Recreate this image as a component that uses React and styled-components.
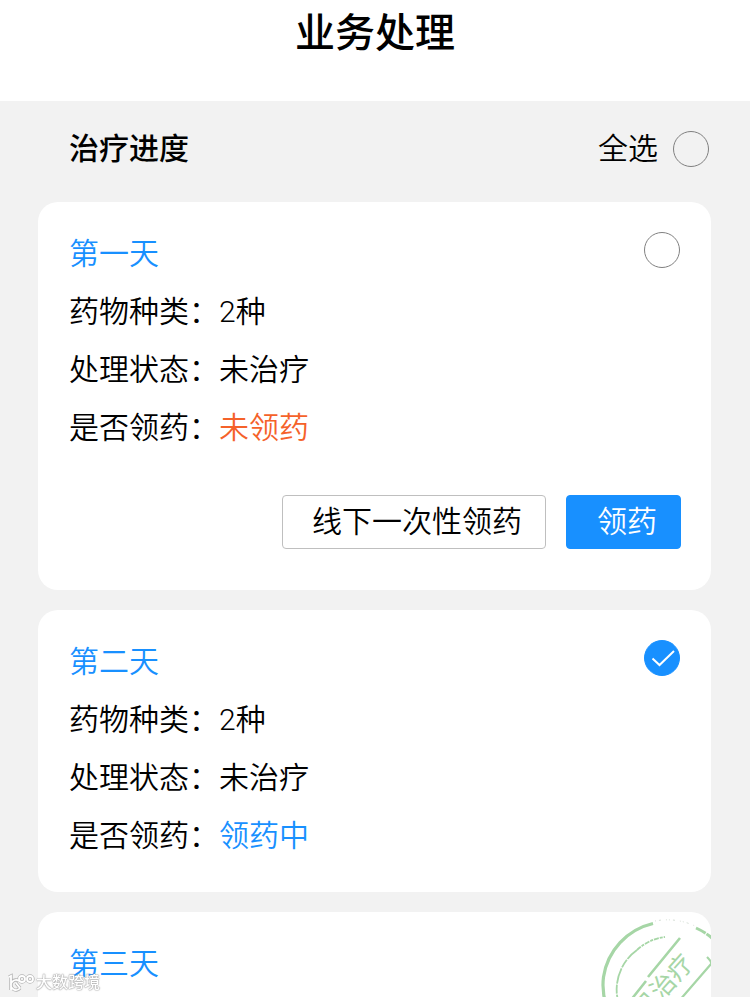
import React, { useState } from 'react'
import styled, { createGlobalStyle } from 'styled-components'

const GlobalStyle = createGlobalStyle`
  * {
    box-sizing: border-box;
  }
  body {
    margin: 0;
    background: #f2f2f2;
    color: #000000;
    font-family: Roboto, "Noto Sans CJK SC", sans-serif;
    font-size: 30px;
    font-weight: 350;
  }
`

const Header = styled.header`
  background: #ffffff;
  padding: 4px 0 37px;
`

const PageTitle = styled.h1`
  margin: 0;
  font-size: 40px;
  line-height: 60px;
  font-weight: 500;
  text-align: center;
`

const Content = styled.main`
  padding: 0 39px 20px 38px;
`

const Toolbar = styled.div`
  display: flex;
  align-items: center;
  justify-content: space-between;
  padding: 30px 2px 35px 31px;
  line-height: 36px;
`

const ToolbarTitle = styled.h2`
  margin: 0;
  font-size: 30px;
  font-weight: 500;
`

const SelectAll = styled.label`
  display: flex;
  align-items: center;
  gap: 15px;
`

const Check = styled.input`
  appearance: none;
  display: block;
  flex: none;
  width: 36px;
  height: 36px;
  margin: 0;
  border: 1px solid #808080;
  border-radius: 50%;
  cursor: pointer;
  &:checked {
    border-color: #1890ff;
    background: #1890ff;
  }
`

const CheckWrap = styled.span`
  position: relative;
  display: block;
`

const Tick = styled.svg`
  position: absolute;
  inset: 0;
  pointer-events: none;
`

const List = styled.div`
  display: flex;
  flex-direction: column;
  gap: 20px;
`

const Card = styled.section`
  position: relative;
  overflow: hidden;
  padding: 23px 30px 27px 31px;
  border-radius: 20px;
  background: #ffffff;
`

const CardHead = styled.div`
  display: flex;
  justify-content: space-between;
  align-items: flex-start;
`

const HeadCheck = styled.div`
  padding: 7px 1px 0 0;
`

const Day = styled.h3`
  margin: 0;
  font-size: 30px;
  font-weight: 350;
  line-height: 58px;
  color: #1890ff;
`

const Row = styled.div`
  display: flex;
  line-height: 58px;
`

const Value = styled.span`
  color: ${props => props.$color || '#000000'};
`

const Actions = styled.div`
  display: flex;
  justify-content: flex-end;
  gap: 20px;
  padding: 38px 0 14px;
`

const Button = styled.button`
  height: 54px;
  padding: ${props => (props.$primary ? '0 23px 0 30px' : '0 23px 0 29px')};
  border: 1px solid ${props => (props.$primary ? '#1890ff' : '#bfbfbf')};
  border-radius: 4px;
  background: ${props => (props.$primary ? '#1890ff' : '#ffffff')};
  color: ${props => (props.$primary ? '#ffffff' : '#000000')};
  font: inherit;
  line-height: 52px;
  cursor: pointer;
`

const StampArt = styled.svg`
  position: absolute;
  top: 3px;
  right: -28px;
  pointer-events: none;
`

const Watermark = styled.div`
  position: fixed;
  left: 6px;
  bottom: 3px;
  display: flex;
  align-items: center;
  gap: 1px;
  height: 22px;
  color: #ffffff;
  font-size: 16px;
  font-weight: 500;
  line-height: 22px;
  text-shadow: 0 0 1px #999999, 0 0 1px #999999, 0 0 2px #aaaaaa;
  pointer-events: none;
`

const days = [
  { id: 1, title: '第一天', kinds: '2种', status: '未治疗', taken: '未领药', color: '#f5622a', actions: true },
  { id: 2, title: '第二天', kinds: '2种', status: '未治疗', taken: '领药中', color: '#1890ff' },
  { id: 3, title: '第三天', done: true },
]

const Checkbox = ({ checked, onChange, label }) => (
  <CheckWrap>
    <Check type="checkbox" checked={checked} onChange={onChange} aria-label={label} />
    {checked && (
      <Tick width="36" height="36" viewBox="0 0 36 36" fill="none" stroke="#ffffff" strokeWidth="2">
        <path d="M8.5 18.5 L15.5 25 L30 11" />
      </Tick>
    )}
  </CheckWrap>
)

const Stamp = () => (
  <StampArt width="140" height="140" viewBox="0 0 140 140" fill="none" stroke="#a6d6a6">
    <path d="M22 115 A65 65 0 0 1 4.5 62 A65 65 0 0 1 54 8.5" strokeWidth="3.2" />
    <path d="M56 6 A65 65 0 0 1 96 11" strokeWidth="1" stroke="#d3dcd3" strokeDasharray="1 3 2 5 1 2" />
    <path d="M97 13 A65 65 0 0 1 130 46" strokeWidth="3" strokeDasharray="11 1" />
    <path d="M22 95 A49 49 0 0 1 38 35" strokeWidth="1.8" strokeDasharray="16 1 9 1" />
    <path d="M38 35 A49 49 0 0 1 66 22" strokeWidth="1.8" strokeDasharray="5 1 3 1" />
    <path d="M24 95 L47 66 M49 62 L81 23" strokeWidth="2.6" />
    <path d="M80 86 L112 49 Q113 47 108 42" strokeWidth="2.2" />
    <text
      transform="translate(64 71) rotate(-48)"
      textAnchor="middle"
      y="9"
      fill="#a6d6a6"
      stroke="none"
      fontSize="25"
      fontWeight="400"
    >
      已治疗
    </text>
  </StampArt>
)

const LogoShape = () => (
  <>
    <path d="M3 4 L5 3 L5 17 M13 8 A5 5 0 1 0 14 15 M10 10 L14 15" />
    <circle cx="16" cy="6" r="3" />
    <circle cx="24" cy="6" r="3" />
  </>
)

const DayCard = ({ day, checked, onToggle }) => (
  <Card>
    <CardHead>
      <Day>{day.title}</Day>
      {!day.done && (
        <HeadCheck>
          <Checkbox checked={checked} onChange={onToggle} label={day.title} />
        </HeadCheck>
      )}
    </CardHead>
    {!day.done && (
      <>
        <Row>药物种类：<Value>{day.kinds}</Value></Row>
        <Row>处理状态：<Value>{day.status}</Value></Row>
        <Row>是否领药：<Value $color={day.color}>{day.taken}</Value></Row>
      </>
    )}
    {day.actions && (
      <Actions>
        <Button type="button">线下一次性领药</Button>
        <Button type="button" $primary>领药</Button>
      </Actions>
    )}
    {day.done && <Stamp />}
  </Card>
)

const App = () => {
  const [selected, setSelected] = useState([2])
  const open = days.filter(d => !d.done).map(d => d.id)
  const all = open.every(id => selected.includes(id))

  const toggle = id => {
    setSelected(selected.includes(id) ? selected.filter(s => s !== id) : [...selected, id])
  }

  return (
    <>
      <GlobalStyle />
      <Header>
        <PageTitle>业务处理</PageTitle>
      </Header>
      <Content>
        <Toolbar>
          <ToolbarTitle>治疗进度</ToolbarTitle>
          <SelectAll>
            全选
            <Checkbox checked={all} onChange={() => setSelected(all ? [] : open)} label="全选" />
          </SelectAll>
        </Toolbar>
        <List>
          {days.map(day => (
            <DayCard key={day.id} day={day} checked={selected.includes(day.id)} onToggle={() => toggle(day.id)} />
          ))}
        </List>
      </Content>
      <Watermark>
        <svg width="29" height="20" viewBox="0 0 29 20" fill="none">
          <g stroke="#b4b4b4" strokeWidth="3.4"><LogoShape /></g>
          <g stroke="#ffffff" strokeWidth="1.8"><LogoShape /></g>
        </svg>
        大数跨境
      </Watermark>
    </>
  )
}

export default App
